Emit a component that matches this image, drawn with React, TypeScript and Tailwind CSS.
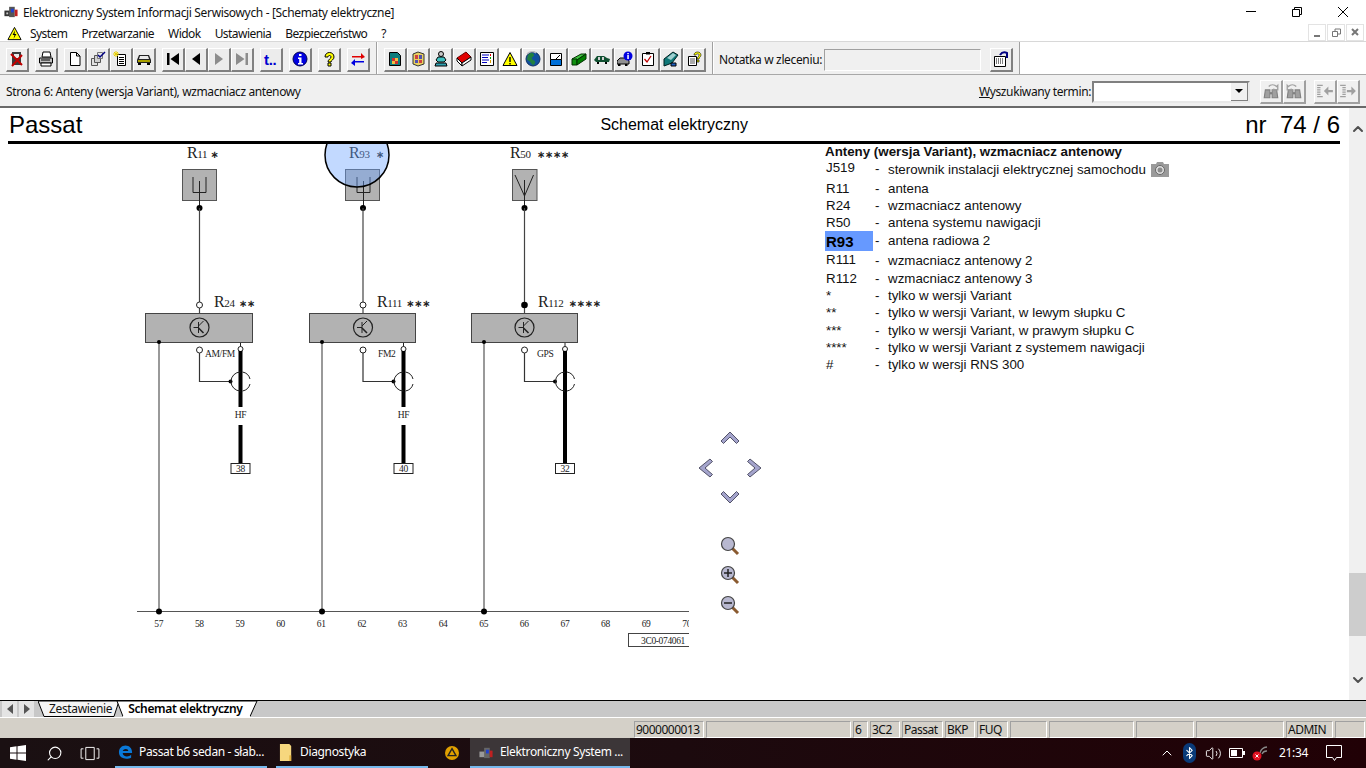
import { Bluetooth, ChevronUp, Search, Volume2 } from 'lucide-react'
import type { ReactNode } from 'react'

const icons: Record<string, ReactNode> = {
  stop: (
    <>
      <path d="M3 1h9v13H3z" fill="#3a3a3a" />
      <path d="M5 3h5v4H5z" fill="#e8e8e8" />
      <path d="M2 3l11 11M13 4L3 15" stroke="#c00000" strokeWidth="2" />
    </>
  ),
  print: (
    <>
      <path d="M5 1h7l1 5H4z" fill="#fff" stroke="#000" />
      <path d="M1.500 7h13v5h-13z" fill="#c0c0c0" stroke="#000" />
      <path d="M3 12h10v3H3z" fill="#fff" stroke="#000" />
      <path d="M3 9h9" stroke="#000" />
    </>
  ),
  doc: <path d="M3.500 1.500h6l3.500 3.500v9.500H3.500zM9.500 1.500V5H13" fill="#fff" stroke="#000" />,
  docs: (
    <>
      <path d="M1.500 7.500h6v7h-6z" fill="#e0e0e0" stroke="#555" />
      <path d="M4.500 4.500h6v7h-6z" fill="#d0d0d0" stroke="#555" />
      <path d="M7.500 1.500h5v6h-5z" fill="#e8e8e8" stroke="#777" />
      <path d="M8 4l2 2 5-5" fill="none" stroke="#000080" strokeWidth="1.500" />
    </>
  ),
  note: (
    <>
      <path d="M4.500 3.500h8v11h-8z" fill="#fff" stroke="#000" />
      <path d="M6 6.500h5M6 8.500h5M6 10.500h5M6 12.500h5" stroke="#000" />
      <path d="M1 1l4 4M5 1L1 5M3 0v6M0 3h6" stroke="#e8d000" />
    </>
  ),
  car: (
    <>
      <path d="M1 9l2-5h10l2 5v3H1z" fill="#222" />
      <path d="M4 5h8l1 3H3z" fill="#e8e8e8" />
      <path d="M2 9h12v2H2z" fill="#a8a000" />
      <path d="M2 12h3v2H2zM11 12h3v2h-3z" fill="#000" />
    </>
  ),
  first: <path d="M2 2h2.500v12H2zM14 2v12L5.500 8z" fill="#000" />,
  prev: <path d="M12 2v12L4 8z" fill="#000" />,
  next: <path d="M4 2v12l8-6z" fill="#8c8c8c" />,
  last: <path d="M11.500 2H14v12h-2.500zM2 2v12l8.500-6z" fill="#8c8c8c" />,
  up: (
    <text x="1" y="14" fontSize="15" fontWeight="700" fill="#0000d0" className="font-['Liberation_Sans',sans-serif]">
      t..
    </text>
  ),
  info: (
    <>
      <circle cx="8" cy="8" r="7" fill="#0000e0" stroke="#000050" />
      <path d="M7 3h2.500v2H7zM6 6.500h3.500V12H11v1.500H6V12h1.200V8H6z" fill="#fff" />
    </>
  ),
  help: <path d="M4 6c0-6 9-6 9 0 0 3-3 3-3 5H7c0-3 3-3 3-5s-3-2-3 0zM7 12h3v3H7z" fill="#ffff00" stroke="#000" />,
  swap: (
    <>
      <path d="M2 5h9V2l4 4-4 2V6.500H2z" fill="#e00000" />
      <path d="M14 10H5V8l-4 4 4 3v-3.500h9z" fill="#0000e0" />
    </>
  ),
  chip: (
    <>
      <path d="M2.500 1.500h8l3 3v10h-11z" fill="#0f7d7d" stroke="#000" />
      <path d="M5 7h6v6H5z" fill="#f0c040" />
      <path d="M5 7h3v3H5zM8 10h3v3H8z" fill="#d03030" />
    </>
  ),
  cube: (
    <>
      <path d="M3 3l5-2 6 2v10l-6 2-5-2z" fill="#e8d060" stroke="#333" />
      <path d="M5 4h3v4H5zM9 9h3v3H9z" fill="#d04040" />
      <path d="M9 4h3v4H9zM5 9h3v3H5z" fill="#5050b0" />
    </>
  ),
  figure: (
    <>
      <circle cx="8" cy="3" r="2.500" fill="#c8c8c8" stroke="#000" />
      <path d="M5 6h6l2 3-2 2H5L3 9z" fill="#40c0c0" stroke="#000" />
      <path d="M3 12h10l1 3H2z" fill="#30a0b0" stroke="#000" />
    </>
  ),
  book: (
    <>
      <path d="M1 7l9-6 5 5-9 6z" fill="#e00000" stroke="#600" />
      <path d="M1 7l5 5v3L1 10z" fill="#fff" stroke="#000" />
      <path d="M6 12l9-6v3l-9 6z" fill="#fff" stroke="#000" />
    </>
  ),
  list: (
    <>
      <path d="M1.500 1.500h13v13h-13z" fill="#fff" stroke="#000" />
      <path d="M3 4h7M3 6.500h6M3 9h7M3 11.500h5" stroke="#0000c0" />
      <path d="M11.500 3v2" stroke="#e00000" />
      <path d="M11.500 6v2" stroke="#00a000" />
      <path d="M11.500 9v3" stroke="#e0a000" />
    </>
  ),
  warn: (
    <>
      <path d="M8 1.500l7 13H1z" fill="#ffff00" stroke="#000" />
      <path d="M7.300 6h1.400v5H7.300zM7.300 12h1.400v1.400H7.300z" fill="#000" />
    </>
  ),
  globe: (
    <>
      <circle cx="8" cy="8" r="7" fill="#1050a0" stroke="#103060" />
      <path d="M3 4c3-3 6-2 6 0s-3 2-2 4 4 1 3 4-3 2-4 0-4-3-4-4z" fill="#208040" />
      <path d="M2 3a7 7 0 0 1 9-1" fill="none" stroke="#c0c0c0" strokeWidth="1.500" />
    </>
  ),
  box: (
    <>
      <path d="M2.500 8.500h11v6h-11z" fill="#0070d8" stroke="#000" />
      <path d="M2.500 2.500h11v6h-11z" fill="#fff" stroke="#000" />
      <path d="M8 8l4-4" stroke="#000" />
    </>
  ),
  block: (
    <>
      <path d="M1 8l9-5h5L6 9z" fill="#40c040" stroke="#003000" />
      <path d="M1 8h5v6H1z" fill="#109010" stroke="#003000" />
      <path d="M6 9l9-6v5l-9 6z" fill="#008000" stroke="#003000" />
    </>
  ),
  turtle: (
    <>
      <path d="M0 9l3-4h7l3 2 3 1-1 3H2z" fill="#105030" />
      <path d="M4 6h2v3H4zM8 6h2v3H8z" fill="#d0d0d0" />
      <path d="M3 11h2v2H3zM11 11h2v2h-2z" fill="#000" />
    </>
  ),
  carinfo: (
    <>
      <path d="M0 10l3-3h7l2 3v3H0z" fill="#909090" stroke="#000" />
      <path d="M1 13h2.500v2H1zM8 13h2.500v2H8z" fill="#000" />
      <circle cx="11" cy="5" r="4.500" fill="#0000e0" />
      <path d="M10.300 2h1.500v1.300h-1.500zM10.300 4h1.500v4h-1.500z" fill="#fff" />
    </>
  ),
  check: (
    <>
      <path d="M2.500 2.500h11v12h-11z" fill="#fff" stroke="#000" />
      <path d="M6 1h4v2.500H6z" fill="#000" />
      <path d="M4.500 8l2.500 3 4-6" fill="none" stroke="#c00000" strokeWidth="1.300" />
    </>
  ),
  folder: (
    <>
      <path d="M1 8l9-7 5 3-6 8-8 3z" fill="#107878" stroke="#002020" />
      <path d="M4 7l6-5 3 2-5 5z" fill="#a0d0d0" />
      <path d="M8 12h5v3H8z" fill="#2060c0" stroke="#000" />
    </>
  ),
  faq: (
    <>
      <path d="M2.500 5.500h8v9h-8z" fill="#fff" stroke="#000" />
      <path d="M4 8h5M4 10h5M4 12h5" stroke="#555" />
      <path d="M8 4c0-4 7-4 7 0 0 2-2 2-2 4h-2c0-2 2-2 2-4s-3-1-3 0zM11 9h2v2h-2z" fill="#ffff00" stroke="#000" strokeWidth=".6" />
    </>
  ),
  notes: (
    <>
      <path d="M1.500 5.500h11v10h-11z" fill="#fff" stroke="#000" />
      <path d="M3 8h8M3 10h8M3 12h8" stroke="#000" strokeDasharray="1 1" />
      <path d="M7 4c2-3 5-3 7-2v5" fill="none" stroke="#000080" strokeWidth="2" />
    </>
  ),
}

function Binoculars({ arrow }: { arrow: 'l' | 'r' }) {
  return (
    <svg viewBox="0 0 16 16" className="h-[18px] w-[18px]">
      <path d="M3 7h4v7H2zM9 7h4l1 7H9z" fill="#a0a0a0" stroke="#808080" />
      <path d="M7 9h2v2H7z" fill="#808080" />
      <path d={arrow === 'r' ? 'M6 4c2-2 5-2 7 0l1-1v4h-4l1-1' : 'M10 4C8 2 5 2 3 4L2 3v4h4L5 6'} fill="none" stroke="#a0a0a0" strokeWidth="1.200" />
    </svg>
  )
}

function Outdent({ flip }: { flip?: boolean }) {
  return (
    <svg viewBox="0 0 16 16" className="h-[18px] w-[18px]">
      {flip ? (
        <path d="M1 3h5M3 5h3M3 7h3M3 9h3M3 11h3M1 13h5" stroke="#a0a0a0" />
      ) : (
        <path d="M1 3h5M1 5h3M1 7h3M1 9h3M1 11h3M1 13h5" stroke="#a0a0a0" />
      )}
      <path d={flip ? 'M7 7h4V4l4 4-4 4V9H7z' : 'M15 7h-4V4L7 8l4 4V9h4z'} fill="#a0a0a0" />
    </svg>
  )
}

function Tb({ icon, className = '', active }: { icon: string; className?: string; active?: boolean }) {
  return (
    <div
      className={
        'flex h-[24px] w-[23px] flex-none items-center justify-center border-t border-l border-t-white border-l-white border-r-2 border-b-2 border-r-[#808080] border-b-[#808080] ' +
        (active ? 'bg-white ' : 'bg-[#ececec] ') +
        className
      }
    >
      <svg viewBox="0 0 16 16" className="h-[16px] w-[16px]">
        {icons[icon]}
      </svg>
    </div>
  )
}

function Sep({ className = '' }: { className?: string }) {
  return <div className={'-mt-[3px] h-[32px] w-[2px] flex-none border-l border-l-[#a0a0a0] border-r border-r-white ' + className} />
}

function TitleBar() {
  return (
    <div className="flex h-[23px] flex-none items-center bg-white pl-[3px]">
      <svg viewBox="0 0 16 16" className="h-[15px] w-[16px] flex-none">
        <path d="M1 7h6v6H1z" fill="#333" />
        <path d="M6 3h6v11H6z" fill="#555" />
        <path d="M8 5h3v4H8z" fill="#2040d0" />
        <path d="M3 9h2v2H3z" fill="#c8c8c8" />
        <path d="M12 6h3v7h-3z" fill="#c02020" />
      </svg>
      <span className="ml-[4px] mt-[2px] text-[12px] leading-none text-[#111]">Elektroniczny System Informacji Serwisowych - [Schematy elektryczne]</span>
      <div className="ml-auto flex h-full">
        <div className="flex h-full w-[46px] items-center justify-center">
          <div className="h-px w-[10px] bg-black" />
        </div>
        <div className="flex h-full w-[46px] items-center justify-center">
          <svg viewBox="0 0 10 10" className="h-[10px] w-[10px]">
            <path d="M.5 2.500h7v7h-7zM2.500 2.500v-2h7v7h-2" fill="none" stroke="#000" />
          </svg>
        </div>
        <div className="flex h-full w-[46px] items-center justify-center">
          <svg viewBox="0 0 10 10" className="h-[10px] w-[10px]">
            <path d="M0 0l10 10M10 0L0 10" stroke="#000" />
          </svg>
        </div>
      </div>
    </div>
  )
}

function MenuBar() {
  const items = [
    { t: 'System', c: 'ml-[8px] mt-[3px]' },
    { t: 'Przetwarzanie', c: 'ml-[14px] mt-[3px]' },
    { t: 'Widok', c: 'ml-[14px] mt-[3px]' },
    { t: 'Ustawienia', c: 'ml-[14px] mt-[3px]' },
    { t: 'Bezpieczeństwo', c: 'ml-[14px] mt-[3px]' },
    { t: '?', c: 'ml-[14px] mt-[3px]' },
  ]
  return (
    <div className="flex h-[18px] flex-none items-center bg-white pl-[7px] text-[12px] tracking-[-0.55px] text-[#111]">
      <svg viewBox="0 0 16 15" className="mt-[2px] h-[15px] w-[15px] flex-none">
        <path d="M8 1l7 13H1z" fill="#ffff00" stroke="#000" />
        <path d="M8.500 4L6 9h2l-1 4 3-5H8z" fill="#000" />
      </svg>
      {items.map((m) => (
        <span key={m.t} className={m.c}>
          {m.t}
        </span>
      ))}
      <div className="ml-auto mr-[2px] flex gap-px">
        <div className="flex h-[17px] w-[18px] items-end justify-center border border-[#e3e3e3] pb-[3px]">
          <div className="h-[2px] w-[6px] bg-[#777]" />
        </div>
        <div className="flex h-[17px] w-[18px] items-center justify-center border border-[#e3e3e3]">
          <svg viewBox="0 0 9 9" className="h-[9px] w-[9px]">
            <path d="M.5 3.500h5v5h-5zM3 3V1h5.500v5H6" fill="none" stroke="#777" />
          </svg>
        </div>
        <div className="flex h-[17px] w-[18px] items-center justify-center border border-[#e3e3e3]">
          <svg viewBox="0 0 8 8" className="h-[8px] w-[8px]">
            <path d="M1 1l6 6M7 1L1 7" stroke="#777" strokeWidth="2" />
          </svg>
        </div>
      </div>
    </div>
  )
}

function Toolbar() {
  return (
    <div className="flex h-[34px] flex-none border-t border-b border-t-[#d8d8d8] border-b-[#a8a8a8] bg-white">
      <div className="flex h-full w-[1021px] flex-none items-center bg-[#f0f0f0] pl-[6px] pt-[3px]">
        <Tb icon="stop" />
        <Tb icon="print" className="ml-[6px]" />
        <Tb icon="doc" className="ml-[6px]" />
        <Tb icon="docs" />
        <Tb icon="note" />
        <Tb icon="car" />
        <Tb icon="first" className="ml-[6px]" />
        <Tb icon="prev" />
        <Tb icon="next" />
        <Tb icon="last" />
        <Tb icon="up" className="ml-[6px]" />
        <Tb icon="info" className="ml-[6px]" />
        <Tb icon="help" className="ml-[6px]" />
        <Tb icon="swap" className="ml-[6px]" />
        <Sep className="ml-[6px]" />
        <Tb icon="chip" className="ml-[6px]" />
        <Tb icon="cube" />
        <Tb icon="figure" />
        <Tb icon="book" />
        <Tb icon="list" />
        <Tb icon="warn" active />
        <Tb icon="globe" />
        <Tb icon="box" />
        <Tb icon="block" />
        <Tb icon="turtle" />
        <Tb icon="carinfo" />
        <Tb icon="check" />
        <Tb icon="folder" />
        <Tb icon="faq" />
        <Sep className="ml-[6px]" />
        <span className="ml-[5px] w-[105px] flex-none whitespace-nowrap text-[12px] text-[#111]">Notatka w zleceniu:</span>
        <div className="h-[22px] w-[157px] flex-none border border-t-[#a0a0a0] border-l-[#a0a0a0] border-r-white border-b-white bg-[#f0f0f0]" />
        <Tb icon="notes" className="ml-[9px]" />
        <Sep className="ml-[6px]" />
      </div>
    </div>
  )
}

function SearchBar() {
  return (
    <div className="flex h-[33px] flex-none items-center border-b-2 border-b-[#696969] bg-[#f0f0f0] pl-[6px] pt-[2px] text-[12px] tracking-[-0.39px] text-[#111]">
      <span>Strona 6: Anteny (wersja Variant), wzmacniacz antenowy</span>
      <span className="ml-auto">
        <span className="underline">W</span>yszukiwany termin:
      </span>
      <div className="ml-px flex h-[22px] w-[158px] flex-none items-center justify-end border-2 border-t-[#808080] border-l-[#808080] border-r-[#e8e8e8] border-b-[#e8e8e8] bg-white">
        <div className="flex h-[18px] w-[17px] items-center justify-center border-r border-b border-r-[#808080] border-b-[#808080] bg-[#f0f0f0]">
          <div className="h-0 w-0 border-x-[4px] border-t-[4px] border-x-transparent border-t-black" />
        </div>
      </div>
      <div className="ml-[10px] flex h-[24px] w-[23px] flex-none items-center justify-center border-t border-l border-t-white border-l-white border-r-2 border-b-2 border-r-[#a0a0a0] border-b-[#a0a0a0]">
        <Binoculars arrow="r" />
      </div>
      <div className="flex h-[24px] w-[23px] flex-none items-center justify-center border-t border-l border-t-white border-l-white border-r-2 border-b-2 border-r-[#a0a0a0] border-b-[#a0a0a0]">
        <Binoculars arrow="l" />
      </div>
      <div className="ml-[8px] flex h-[24px] w-[23px] flex-none items-center justify-center border-t border-l border-t-white border-l-white border-r-2 border-b-2 border-r-[#a0a0a0] border-b-[#a0a0a0]">
        <Outdent />
      </div>
      <div className="mr-[6px] flex h-[24px] w-[23px] flex-none items-center justify-center border-t border-l border-t-white border-l-white border-r-2 border-b-2 border-r-[#a0a0a0] border-b-[#a0a0a0]">
        <Outdent flip />
      </div>
    </div>
  )
}

function Label({ x, y, id, stars, gap = 3 }: { x: number; y: number; id: string; stars: string; gap?: number }) {
  return (
    <text x={x} y={y} fill="#222">
      <tspan fontSize="16">R</tspan>
      <tspan fontSize="11">{id}</tspan>
      <tspan dx={gap} fontSize="10" fontWeight="700" className="font-['DejaVu_Sans',sans-serif]">
        {stars}
      </tspan>
    </text>
  )
}

function Dot({ x, y, r = 3 }: { x: number; y: number; r?: number }) {
  return <circle cx={x} cy={y} r={r} fill="#000" />
}

function Open({ x, y }: { x: number; y: number }) {
  return <circle cx={x} cy={y} r="3" fill="#fff" stroke="#222" />
}

// one amplifier block with its feed, earth and coax line
function Amp({
  x,
  w,
  cx,
  gnd,
  tx,
  topDot,
  pin,
  hf,
  name,
}: {
  x: number
  w: number
  cx: number
  gnd: number
  tx: number
  topDot?: boolean
  pin: string
  hf: boolean
  name: { t: string; x: number }
}) {
  return (
    <g>
      <path d={`M${cx} 208V313`} stroke="#444" strokeWidth="1.200" />
      {topDot ? <Dot x={cx} y={305} r={3.300} /> : <Open x={cx} y={305} />}
      <rect x={x + 0.5} y="313.500" width={w} height="29" fill="#b2b2b2" stroke="#444" />
      <circle cx={cx} cy="327.500" r="9.500" fill="none" stroke="#222" strokeWidth="1.200" />
      <path d={`M${cx - 6} 327.500H${cx - 1}M${cx - 1} 322V333M${cx - 1} 326L${cx + 4} 321`} stroke="#222" fill="none" />
      <path d={`M${cx - 1} 328L${cx + 4} 333`} stroke="#222" strokeWidth="1.600" />
      <path d={`M${gnd} 343V611`} stroke="#555" strokeWidth="1.200" />
      <Dot x={gnd} y={342} r={2} />
      <Open x={cx} y={350} />
      <path d={`M${cx} 353V381.500H${tx - 10}`} fill="none" stroke="#333" strokeWidth="1.200" />
      <Dot x={tx - 10} y={381.500} r={2} />
      <path d={`M${tx} 343V349`} stroke="#222" />
      <circle cx={tx} cy="349" r="2.500" fill="#fff" stroke="#222" />
      {hf ? (
        <>
          <path d={`M${tx} 351V407M${tx} 425V463`} stroke="#000" strokeWidth="4" />
          <text x={tx} y="418" fontSize="9.500" fill="#222" textAnchor="middle">
            HF
          </text>
        </>
      ) : (
        <path d={`M${tx} 351V463`} stroke="#000" strokeWidth="4" />
      )}
      <path
        d={`M${tx} 372A9.500 9.500 0 0 0 ${tx} 391M${tx + 2} 372A9.500 9.500 0 0 1 ${tx + 9.500} 379M${tx + 9.500} 384A9.500 9.500 0 0 1 ${tx + 2} 391`}
        fill="none"
        stroke="#222"
      />
      <rect x={tx - 9.500} y="463.500" width="19" height="10" fill="#fff" stroke="#222" />
      <text x={tx} y="472" fontSize="9.500" fill="#222" textAnchor="middle">
        {pin}
      </text>
      <text x={name.x} y="357" fontSize="9.500" fill="#222">
        {name.t}
      </text>
    </g>
  )
}

function Schematic() {
  const nums = Array.from({ length: 14 }, (_, i) => 57 + i)
  return (
    <svg viewBox="0 144 689 556" className="h-[556px] w-[689px] flex-none font-['Liberation_Serif',serif]">
      <Label x={187} y={158} id="11" stars="∗" />
      <rect x="182.500" y="169.500" width="34" height="31" fill="#b2b2b2" stroke="#555" />
      <path d="M193 177V192.500H206V177M199.500 181V208" fill="none" stroke="#222" />
      <Dot x={199.500} y={208} />

      <rect x="345.500" y="169.500" width="34" height="31" fill="#b2b2b2" stroke="#555" />
      <path d="M357 177V192.500H370V177M363.500 181V208" fill="none" stroke="#222" />
      <Dot x={363} y={208} />
      <Label x={349} y={158} id="93" stars="∗" gap={6} />
      <circle cx="357" cy="155" r="32" fill="#6ea5ff" fillOpacity="0.420" stroke="#000" strokeWidth="1.500" />

      <Label x={510} y={158} id="50" stars="∗∗∗∗" gap={6} />
      <rect x="512.500" y="169.500" width="24.500" height="31" fill="#b2b2b2" stroke="#555" />
      <path d="M515 175L524.500 196L533.500 175M524.500 180V208" fill="none" stroke="#222" />
      <Dot x={524.500} y={208} />

      <Amp x={145} w={107} cx={199.500} gnd={159} tx={240.500} pin="38" hf name={{ t: 'AM/FM', x: 205 }} />
      <Amp x={309} w={106} cx={363} gnd={322} tx={403.500} pin="40" hf name={{ t: 'FM2', x: 378 }} />
      <Amp x={471} w={106} cx={524.500} gnd={484} tx={565} topDot pin="32" hf={false} name={{ t: 'GPS', x: 537 }} />
      <Label x={214} y={307} id="24" stars="∗∗" gap={4} />
      <Label x={377} y={307} id="111" stars="∗∗∗" gap={4} />
      <Label x={538} y={307} id="112" stars="∗∗∗∗" gap={5} />

      <path d="M137 611.500H689" stroke="#555" strokeWidth="1.200" />
      <Dot x={159} y={611.500} />
      <Dot x={322} y={611.500} />
      <Dot x={484} y={611.500} />
      {nums.map((n, i) => (
        <text key={n} x={158.700 + i * 40.620} y="627" fontSize="9.500" fill="#222" textAnchor="middle">
          {n}
        </text>
      ))}
      <rect x="628.500" y="633.500" width="70" height="13" fill="#fff" stroke="#444" />
      <text x="641" y="644" fontSize="9.500" fill="#222">
        3C0-074061
      </text>
    </svg>
  )
}

function Chevron({ d }: { d: string }) {
  return (
    <svg viewBox="0 0 20 20" className="h-[20px] w-[20px]">
      <path d={d} fill="#a4a4cc" stroke="#44445a" strokeWidth="0.900" />
    </svg>
  )
}

function Lens({ sign }: { sign?: 'plus' | 'minus' }) {
  return (
    <svg viewBox="0 0 20 20" className="h-[20px] w-[20px]">
      <path d="M12 12l6 6" stroke="#8a5a30" strokeWidth="3" />
      <circle cx="8" cy="8" r="6.500" fill="#b8b8d0" stroke="#444" strokeWidth="1.200" />
      {sign && <path d={sign === 'plus' ? 'M4 8h8M8 4v8' : 'M4 8h8'} stroke="#222" strokeWidth="1.500" />}
    </svg>
  )
}

function NavPad() {
  return (
    <div className="flex w-[82px] flex-none flex-col items-center pt-[285px]">
      <Chevron d="M10 3l9 9-2.500 2.500L10 8l-6.500 6.500L1 12z" />
      <div className="mt-[9px] flex w-[70px] justify-between">
        <Chevron d="M15 1l2.500 2.500L10 10l7.500 6.500L15 19 4 10z" />
        <Chevron d="M5 1L2.500 3.500 10 10l-7.500 6.500L5 19l11-9z" />
      </div>
      <div className="mt-[8px]">
        <Chevron d="M10 17l9-9-2.500-2.500L10 12 3.500 5.500 1 8z" />
      </div>
      <div className="mt-[30px]">
        <Lens />
      </div>
      <div className="mt-[9px]">
        <Lens sign="plus" />
      </div>
      <div className="mt-[10px]">
        <Lens sign="minus" />
      </div>
    </div>
  )
}

const legend = [
  { k: 'J519', d: 'sterownik instalacji elektrycznej samochodu', h: 'h-[22px]', pt: 'pt-[2px]', top: 'pt-[3px]', camera: true },
  { k: 'R11', d: 'antena', h: 'h-[17px]' },
  { k: 'R24', d: 'wzmacniacz antenowy', h: 'h-[17px]' },
  { k: 'R50', d: 'antena systemu nawigacji', h: 'h-[17px]' },
  { k: 'R93', d: 'antena radiowa 2', h: 'h-[20px]', hot: true },
  { k: 'R111', d: 'wzmacniacz antenowy 2', h: 'h-[19px]' },
  { k: 'R112', d: 'wzmacniacz antenowy 3', h: 'h-[17px]' },
  { k: '*', d: 'tylko w wersji Variant', h: 'h-[17px]' },
  { k: '**', d: 'tylko w wersji Variant, w lewym słupku C', h: 'h-[18px]' },
  { k: '***', d: 'tylko w wersji Variant, w prawym słupku C', h: 'h-[17px]' },
  { k: '****', d: 'tylko w wersji Variant z systemem nawigacji', h: 'h-[17px]' },
  { k: '#', d: 'tylko w wersji RNS 300', h: 'h-[17px]' },
]

function Legend() {
  return (
    <div className="ml-[54px] flex-1 font-['Liberation_Sans',sans-serif] text-[13.330px] leading-none tracking-normal text-[#111]">
      <div className="flex h-[14px] items-end font-bold">Anteny (wersja Variant), wzmacniacz antenowy</div>
      {legend.map((r) => (
        <div key={r.k} className={'flex items-center ' + r.h}>
          {r.hot ? (
            <span className="flex h-full w-[48px] flex-none items-center bg-[#6699ff] pl-px text-[15px] font-bold text-black">{r.k}</span>
          ) : (
            <span className={'w-[48px] flex-none self-start pl-px ' + (r.top ?? 'pt-[2px]')}>{r.k}</span>
          )}
          <span className="w-[15px] flex-none pl-[2px]">-</span>
          <span className={r.pt ?? ''}>{r.d}</span>
          {r.camera && (
            <svg viewBox="0 0 18 16" className="ml-[5px] h-[16px] w-[18px] flex-none">
              <path d="M0 3h5l1-2h6l1 2h5v13H0z" fill="#9a9a9a" />
              <circle cx="9" cy="9" r="4.500" fill="#e0e0e0" stroke="#666" />
              <circle cx="9" cy="9" r="2.500" fill="#8a8a8a" />
            </svg>
          )}
        </div>
      ))}
    </div>
  )
}

function Scrollbar() {
  return (
    <div className="flex w-[17px] flex-none flex-col items-center bg-[#f0f0f0]">
      <div className="flex h-[29px] flex-none items-end justify-center">
        <ChevronUp size={16} strokeWidth={3} color="#505050" />
      </div>
      <div className="mt-[436px] h-[63px] w-full flex-none bg-[#cdcdcd]" />
      <div className="flex flex-1 items-end justify-center pb-[12px]">
        <ChevronUp size={16} strokeWidth={3} color="#505050" className="rotate-180" />
      </div>
    </div>
  )
}

function Content() {
  return (
    <div className="flex min-h-0 flex-1 bg-white">
      <div className="flex min-w-0 flex-1 flex-col pl-[8px] pr-[9px]">
        <div className="flex h-[36px] flex-none items-center border-b-[3px] border-b-black font-['Liberation_Sans',sans-serif] tracking-normal text-black">
          <span className="pl-px text-[24px] leading-none">Passat</span>
          <span className="ml-[518px] text-[16px] leading-none">Schemat elektryczny</span>
          <span className="ml-auto text-[24px] leading-none whitespace-pre">nr  74 / 6</span>
        </div>
        <div className="-ml-[8px] flex min-h-0 flex-1">
          <Schematic />
          <NavPad />
          <Legend />
        </div>
      </div>
      <Scrollbar />
    </div>
  )
}

function TabStrip() {
  return (
    <div className="flex h-[17px] flex-none border-t border-t-black bg-[#c8c8c8] pl-[2px] text-[12px] leading-none text-[#111]">
      <div className="flex h-full w-[15px] items-center justify-center bg-[#e4e4e4]">
        <div className="h-0 w-0 border-y-[5px] border-r-[6px] border-y-transparent border-r-[#555]" />
      </div>
      <div className="ml-[2px] flex h-full w-[15px] items-center justify-center bg-[#e4e4e4]">
        <div className="h-0 w-0 border-y-[5px] border-l-[6px] border-y-transparent border-l-[#555]" />
      </div>
      <div className="relative ml-[4px] flex h-full w-[220px] flex-none">
        <svg viewBox="0 0 220 16" className="absolute inset-0 h-full w-full">
          <path d="M0 0L6 15.500H76L81 0z" fill="#f4f4f4" stroke="#000" />
          <path d="M79 0L85 15.500H212L219 0z" fill="#fff" stroke="#000" />
          <path d="M85 15.500H212" stroke="#fff" strokeWidth="1.500" />
        </svg>
        <span className="relative ml-[11px] mt-[2px]">Zestawienie</span>
        <span className="relative ml-[16px] mt-[2px] font-semibold text-black">Schemat elektryczny</span>
      </div>
    </div>
  )
}

function StatusBar() {
  const cells = [
    { w: 'w-[70px]', t: '9000000013' },
    { w: 'w-[145px]', t: '' },
    { w: 'w-[15px]', t: '6' },
    { w: 'w-[30px]', t: '3C2' },
    { w: 'w-[41px]', t: 'Passat' },
    { w: 'w-[30px]', t: 'BKP' },
    { w: 'w-[31px]', t: 'FUQ' },
    { w: 'w-[37px]', t: '' },
    { w: 'w-[85px]', t: '' },
    { w: 'w-[58px]', t: '' },
    { w: 'w-[88px]', t: '' },
    { w: 'w-[47px]', t: 'ADMIN' },
    { w: 'w-[30px]', t: '' },
  ]
  return (
    <div className="flex h-[21px] flex-none items-end justify-end gap-[2px] border-t border-t-white bg-[#d4d0c8] pr-px text-[12px] leading-none tracking-[-0.5px] text-[#111]">
      {cells.map((c, i) => (
        <div
          key={i}
          className={'flex h-[17px] flex-none items-center overflow-hidden border border-t-[#a0a0a0] border-l-[#a0a0a0] border-r-white border-b-white pl-px ' + c.w}
        >
          {c.t}
        </div>
      ))}
    </div>
  )
}

function TaskItem({ w, ml, active, icon, label }: { w: string; ml: string; active?: boolean; icon: ReactNode; label: string }) {
  return (
    <div
      className={
        'flex h-full flex-none items-center gap-[6px] whitespace-nowrap border-b-2 border-b-[#76b9ed] pl-[3px] text-[12px] text-white ' +
        w +
        ' ' +
        ml +
        (active ? ' bg-[#3c3638]' : '')
      }
    >
      {icon}
      <span>{label}</span>
    </div>
  )
}

function Taskbar() {
  return (
    <div className="flex h-[30px] flex-none items-center bg-gradient-to-r from-[#1a1012] via-[#1c0a0e] to-[#210106] text-white">
      <svg viewBox="0 0 16 16" className="ml-[10px] h-[16px] w-[16px] flex-none">
        <path d="M0 2.300l6.500-1v6.300H0zM7.500 1.200L16 0v7.600H7.500zM0 8.500h6.500v6.300l-6.500-1zM7.500 8.500H16V16l-8.500-1.200z" fill="#fff" />
      </svg>
      <Search size={17} strokeWidth={1.500} className="ml-[20px] flex-none -scale-x-100" />
      <svg viewBox="0 0 20 16" className="ml-[17px] h-[15px] w-[20px] flex-none">
        <path d="M5.500 1.500h9v13h-9zM3 3H.500v10H3M17 3h2.500v10H17" fill="none" stroke="#fff" />
      </svg>
      <TaskItem
        w="w-[152px]"
        ml="ml-[15px]"
        label="Passat b6 sedan - słab..."
        icon={
          <svg viewBox="0 0 16 16" className="h-[16px] w-[15px] flex-none">
            <path d="M1 8c0-4 3-7 7-7s7 3 7 7v1H5c0 4 6 5 9 2v3c-4 2-13 2-13-6zm4-1h6c0-3-5-3-6 0z" fill="#0a78d7" />
          </svg>
        }
      />
      <TaskItem
        w="w-[152px]"
        ml="ml-[9px]"
        label="Diagnostyka"
        icon={
          <svg viewBox="0 0 16 18" className="h-[19px] w-[15px] flex-none">
            <path d="M1 0h10l2 2v16H1z" fill="#f6d77e" />
            <path d="M11 12h2v6h-2z" fill="#e0b040" />
          </svg>
        }
      />
      <svg viewBox="0 0 16 16" className="ml-[17px] h-[14px] w-[14px] flex-none">
        <circle cx="8" cy="8" r="8" fill="#e0a000" />
        <path d="M8 3l4.500 8h-9z" fill="none" stroke="#222" strokeWidth="1.600" />
      </svg>
      <TaskItem
        w="w-[160px]"
        ml="ml-[11px]"
        active
        label="Elektroniczny System ..."
        icon={
          <svg viewBox="0 0 16 16" className="ml-[5px] h-[15px] w-[16px] flex-none">
            <path d="M1 7h6v6H1z" fill="#999" />
            <path d="M6 3h6v11H6z" fill="#666" />
            <path d="M8 5h3v4H8z" fill="#2040d0" />
            <path d="M12 6h3v7h-3z" fill="#c02020" />
          </svg>
        }
      />
      <div className="ml-auto flex h-full items-center">
        <ChevronUp size={16} strokeWidth={1.500} />
        <div className="ml-[8px] flex h-[20px] w-[13px] items-center justify-center rounded-full bg-[#0a3a78]">
          <Bluetooth size={14} strokeWidth={2} />
        </div>
        <Volume2 size={17} strokeWidth={1.300} className="ml-[9px]" />
        <svg viewBox="0 0 16 10" className="ml-[7px] h-[10px] w-[16px]">
          <path d="M.5.5h13v9H.500z" fill="none" stroke="#fff" />
          <path d="M2 2h6v6H2zM14 3h2v4h-2z" fill="#fff" />
        </svg>
        <svg viewBox="0 0 16 16" className="ml-[7px] h-[16px] w-[16px]">
          <path d="M8 8a8 8 0 0 1 7-6M10 9a5 5 0 0 1 5-3" fill="none" stroke="#888" strokeWidth="1.300" />
          <circle cx="5" cy="11" r="4.500" fill="#e01020" />
          <path d="M3.500 9.500l3 3M6.500 9.500l-3 3" stroke="#fff" />
        </svg>
        <span className="ml-[11px] text-[12px]">21:34</span>
        <svg viewBox="0 0 16 17" className="ml-[18px] mr-[24px] h-[17px] w-[16px]">
          <path d="M.5.5h15v12h-5l-2 3-2-3h-6z" fill="none" stroke="#fff" />
        </svg>
      </div>
    </div>
  )
}

export default function App() {
  return (
    <div className="flex h-[768px] w-[1366px] flex-col overflow-hidden bg-white font-['Noto_Sans',sans-serif] tracking-[-0.35px]">
      <TitleBar />
      <MenuBar />
      <Toolbar />
      <SearchBar />
      <Content />
      <TabStrip />
      <StatusBar />
      <Taskbar />
    </div>
  )
}
